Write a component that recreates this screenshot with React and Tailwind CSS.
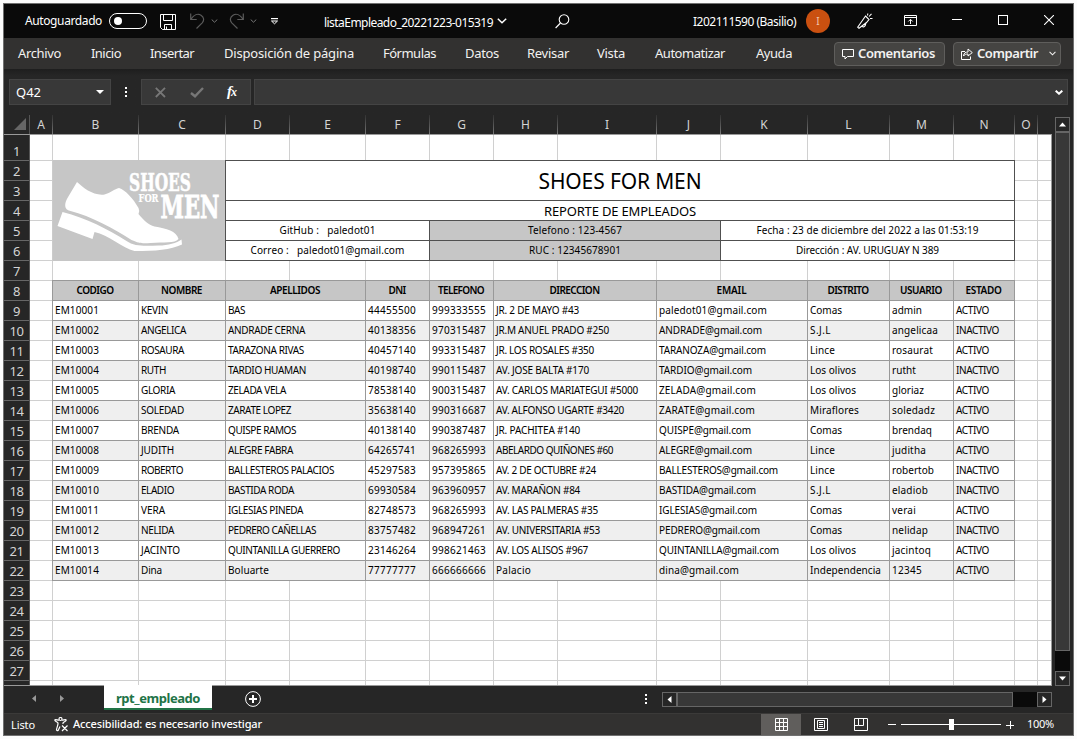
import React, { useLayoutEffect, useRef } from "react";

/* Text whose letter spacing is computed so that it takes `w` pixels. */
function Fit({ w, children, className = "" }) {
  const ref = useRef(null);
  useLayoutEffect(() => {
    const el = ref.current;
    const apply = () => {
      el.style.letterSpacing = "0px";
      const natural = el.getBoundingClientRect().width;
      const gap = (w - natural) / Math.max(1, el.textContent.length);
      el.style.letterSpacing = gap + "px";
    };
    apply();
    document.fonts.ready.then(apply);
  }, [w, children]);
  return (
    <span ref={ref} className={"inline-block whitespace-pre " + className}>
      {children}
    </span>
  );
}

const COLS = [
  ["A", 23], ["B", 86], ["C", 87], ["D", 64], ["E", 76], ["F", 64], ["G", 64], ["H", 64],
  ["I", 99], ["J", 64], ["K", 87], ["L", 82], ["M", 64], ["N", 61], ["O", 23], ["", 13],
];

/* label, first grid column, column span, label width */
const HEADS = [
  ["CODIGO", 2, 1, 37], ["NOMBRE", 3, 1, 41], ["APELLIDOS", 4, 2, 50], ["DNI", 6, 1, 17],
  ["TELEFONO", 7, 1, 46], ["DIRECCION", 8, 2, 50], ["EMAIL", 10, 2, 30], ["DISTRITO", 12, 1, 41],
  ["USUARIO", 13, 1, 42], ["ESTADO", 14, 1, 36],
];

const NAMES = [
  ["KEVIN", 27], ["ANGELICA", 45], ["ROSAURA", 43], ["RUTH", 25], ["GLORIA", 34], ["SOLEDAD", 43], ["BRENDA", 38],
  ["JUDITH", 33], ["ROBERTO", 42], ["ELADIO", 33], ["VERA", 24], ["NELIDA", 33], ["JACINTO", 39], ["Dina", 21],
];
const SURNAMES = [
  ["BAS", 17], ["ANDRADE CERNA", 77], ["TARAZONA RIVAS", 76], ["TARDIO HUAMAN", 78], ["ZELADA VELA", 58],
  ["ZARATE LOPEZ", 63], ["QUISPE RAMOS", 68], ["ALEGRE FABRA", 65], ["BALLESTEROS PALACIOS", 106],
  ["BASTIDA RODA", 66], ["IGLESIAS PINEDA", 75], ["PEDRERO CAÑELLAS", 88], ["QUINTANILLA GUERRERO", 112], ["Boluarte", 41],
];
const DNI = ["44455500", "40138356", "40457140", "40198740", "78538140", "35638140", "40138140", "64265741", "45297583", "69930584", "82748573", "83757482", "23146264", "77777777"];
const PHONES = ["999333555", "970315487", "993315487", "990115487", "900315487", "990316687", "990387487", "968265993", "957395865", "963960957", "968265993", "968947261", "998621463", "666666666"];
const STREETS = [
  ["JR. 2 DE MAYO #43", 83], ["JR.M ANUEL PRADO #250", 113], ["JR. LOS ROSALES #350", 98], ["AV. JOSE BALTA #170", 93],
  ["AV. CARLOS MARIATEGUI #5000", 142], ["AV. ALFONSO UGARTE #3420", 128], ["JR. PACHITEA #140", 84],
  ["ABELARDO QUIÑONES #60", 117], ["AV. 2 DE OCTUBRE #24", 100], ["AV. MARAÑON #84", 84], ["AV. LAS PALMERAS #35", 102],
  ["AV. UNIVERSITARIA #53", 104], ["AV. LOS ALISOS #967", 92], ["Palacio", 35],
];
const EMAILS = [
  ["paledot01", 108], ["ANDRADE", 103], ["TARANOZA", 107], ["TARDIO", 93], ["ZELADA", 97], ["ZARATE", 96], ["QUISPE", 92],
  ["ALEGRE", 93], ["BALLESTEROS", 119], ["BASTIDA", 97], ["IGLESIAS", 98], ["PEDRERO", 101], ["QUINTANILLA", 120], ["dina", 80],
];
const DISTRICTS = [
  ["Comas", 32], ["S.J.L", 21], ["Lince", 25], ["Los olivos", 46], ["Los olivos", 46], ["Miraflores", 49], ["Comas", 32],
  ["Lince", 25], ["Lince", 25], ["S.J.L", 21], ["Comas", 32], ["Comas", 32], ["Los olivos", 46], ["Independencia", 71],
];
const USERS = [
  ["admin", 30], ["angelicaa", 46], ["rosaurat", 41], ["rutht", 24], ["gloriaz", 32], ["soledadz", 43], ["brendaq", 40],
  ["juditha", 34], ["robertob", 42], ["eladiob", 36], ["verai", 24], ["nelidap", 36], ["jacintoq", 39], ["12345", 30],
];
const INACTIVE = [1, 3, 8, 9, 11];

const RECORDS = NAMES.map((n, i) => [
  ["EM100" + String(i + 1).padStart(2, "0"), 44],
  n,
  SURNAMES[i],
  [DNI[i], 48],
  [PHONES[i], 54],
  STREETS[i],
  [EMAILS[i][0] + "@gmail.com", EMAILS[i][1]],
  DISTRICTS[i],
  USERS[i],
  INACTIVE.includes(i) ? ["INACTIVO", 43] : ["ACTIVO", 33],
]);

const TRACKS = COLS.map((c) => c[1] + "px").join(" ");

function Area({ c, r, cs = 1, rs = 1, className = "", children }) {
  return (
    <div className={className} style={{ gridColumn: `${c} / span ${cs}`, gridRow: `${r} / span ${rs}` }}>
      {children}
    </div>
  );
}

function Logo() {
  return (
    <svg viewBox="0 0 173 101" className="block h-full w-full">
      <rect width="173" height="101" fill="#c6c6c6" />
      <g fill="#fff">
        <path d="M24.500 22 C31 28 41 36 52 34.500 C58 33 62 29 66.500 28 C73 30 81 39 86 48 Q87.500 51 86 54 C91 60 96 65 102 66.500 C114 68.500 124 71 126 79 C122 83.500 112 82 98 83 C90 83.500 87 83.500 79 80 C62 69 38 56 18 51 C11 50 12 43 15 38 Z" />
        <path d="M10 52 C34 58 55 69 74 81 C83 87.500 96 85.500 106 85.500 C116 85.500 124 83 129 79.500 L129.500 84.500 C118 90 103 91 82 91 C70 88 56 75 42 72 L40 79 L5 66 Z" />
        <g fontFamily='"DejaVu Serif", serif' fontWeight="700" stroke="#fff">
          <text x="76.500" y="31" fontSize="24" strokeWidth=".6" textLength="62" lengthAdjust="spacingAndGlyphs">SHOES</text>
          <text x="86" y="42" fontSize="11.500" strokeWidth=".2" textLength="20" lengthAdjust="spacingAndGlyphs">FOR</text>
          <text x="108" y="57.500" fontSize="32" strokeWidth=".9" textLength="59" lengthAdjust="spacingAndGlyphs">MEN</text>
        </g>
      </g>
    </svg>
  );
}

function Sheet() {
  const base = [];
  for (let r = 1; r <= 28; r++)
    for (let c = 1; c <= 16; c++) {
      const inReport = r >= 2 && r <= 6 && c >= 2 && c <= 14;
      const inTable = r >= 8 && r <= 22 && c >= 2 && c <= 14;
      if (inReport || inTable) continue;
      base.push(
        <Area key={r + "-" + c} c={c} r={r} className={(c < 16 ? "border-r " : "") + (r < 28 ? "border-b " : "") + "border-[#d0d0d0]"} />
      );
    }
  const box = "-ml-px -mt-px flex items-center justify-center border border-[#505050] ";
  const line = box + "pb-0.5 ";
  return (
    <div
      className="grid h-[550px] w-[1021px] shrink-0 grid-rows-[26px_repeat(26,20px)_4px] overflow-hidden bg-white font-['Noto_Sans',sans-serif] text-[10px] leading-none text-black"
      style={{ gridTemplateColumns: TRACKS }}
    >
      {base}
      <Area c={2} r={2} cs={2} rs={5} className="-ml-px -mt-px"><Logo /></Area>
      <Area c={4} r={2} cs={11} rs={2} className={box + "pt-0.5 text-[21px]"}><Fit w={163}>SHOES FOR MEN</Fit></Area>
      <Area c={4} r={4} cs={11} className={box + "pt-0.5 text-[13px]"}><Fit w={152}>REPORTE DE EMPLEADOS</Fit></Area>
      <Area c={4} r={5} cs={3} className={line}><Fit w={96}>{"GitHub :   paledot01"}</Fit></Area>
      <Area c={7} r={5} cs={4} className={line + "bg-[#c6c6c6]"}><Fit w={94}>Telefono : 123-4567</Fit></Area>
      <Area c={11} r={5} cs={4} className={line}><Fit w={222}>Fecha : 23 de diciembre del 2022 a las 01:53:19</Fit></Area>
      <Area c={4} r={6} cs={3} className={line}><Fit w={154}>{"Correo :   paledot01@gmail.com"}</Fit></Area>
      <Area c={7} r={6} cs={4} className={line + "bg-[#c6c6c6]"}><Fit w={92}>RUC : 12345678901</Fit></Area>
      <Area c={11} r={6} cs={4} className={line}><Fit w={143}>Dirección : AV. URUGUAY N 389</Fit></Area>
      {HEADS.map(([t, c, cs, w]) => (
        <Area key={t} c={c} r={8} cs={cs} className="-ml-px -mt-px flex items-center justify-center border border-[#999] bg-[#c6c6c6] pb-0.5 pr-px font-semibold">
          <Fit w={w}>{t}</Fit>
        </Area>
      ))}
      {RECORDS.map((rec, i) =>
        rec.map(([t, w], k) => (
          <Area
            key={i + "-" + k}
            c={HEADS[k][1]}
            r={9 + i}
            cs={HEADS[k][2]}
            className={"-ml-px -mt-px flex items-center border border-[#999] pb-0.5 pl-0.5 " + (i % 2 ? "bg-[#efefef]" : "bg-white")}
          >
            <Fit w={w}>{t}</Fit>
          </Area>
        ))
      )}
    </div>
  );
}

function Chevron({ className = "" }) {
  return (
    <svg viewBox="0 0 10 6" className={className} fill="none" stroke="currentColor" strokeWidth="1.500"><path d="M.8 .8 5 4.800 9.200 .8" /></svg>
  );
}

function TitleBar() {
  return (
    <div className="flex h-[34px] shrink-0 items-center bg-[#0a0a0a] text-[12px] text-white">
      <Fit w={77} className="ml-[21px] pb-px">Autoguardado</Fit>
      <div className="mb-px ml-[7px] flex h-4 w-[38px] items-center rounded-full border border-white pl-1"><div className="size-2 rounded-full bg-white" /></div>
      <svg className="ml-[13px] mt-0.5 size-4" viewBox="0 0 16 16" fill="none" stroke="#fff">
        <path d="M.5 .5h15v15H2.500L.5 13.500ZM3.500 .5v6h9v-6M4.500 15.500v-5h7v5M6.500 15.500v-3" />
      </svg>
      <svg className="ml-[14px] h-4 w-[15px]" viewBox="0 0 15 16" fill="none" stroke="#5a5a5a" strokeWidth="1.200"><path d="M.7 .5v6h6M.9 6.300C4 1.500 8 .3 11 2.200c3 2 3.400 5 1.200 7.600L6.500 15.500" /></svg>
      <Chevron className="ml-[6px] h-[4px] w-[7px] text-[#777]" />
      <svg className="ml-[11px] h-4 w-[15px]" viewBox="0 0 15 16" fill="none" stroke="#5a5a5a" strokeWidth="1.200"><path d="M14.300 .5v6h-6M14.100 6.300C11 1.500 7 .3 4 2.200c-3 2-3.400 5-1.200 7.600L8.500 15.500" /></svg>
      <Chevron className="ml-[6px] h-[4px] w-[7px] text-[#777]" />
      <svg className="ml-[14px] h-[7px] w-[7px]" viewBox="0 0 7 7"><path d="M0 0h7v1.200H0Z" fill="#fff" /><path d="M.5 3h6L3.500 5.800Z" fill="none" stroke="#fff" /></svg>
      <Fit w={169} className="ml-[46px] mt-1">listaEmpleado_20221223-015319</Fit>
      <Chevron className="ml-[4px] h-[6px] w-[10px]" />
      <svg className="ml-[48px] size-[15px]" viewBox="0 0 15 15" fill="none" stroke="#fff" strokeWidth="1.100"><circle cx="9" cy="5.500" r="4.800" /><path d="M5.500 9 .6 14" /></svg>
      <Fit w={103} className="ml-[123px] mt-0.5">I202111590 (Basilio)</Fit>
      <div className="ml-[10px] flex size-6 items-center justify-center rounded-full bg-[#ca5010] text-[10px] text-[#f3c9b0]">I</div>
      <svg className="ml-[27px] size-4" viewBox="0 0 16 16" fill="none" stroke="#fff" strokeWidth="1.100"><path d="M8.500 3 12 6.500 9.500 9.500 2 15.300.7 14.200ZM5 13c.5 1.600 3.500 1.300 4-3M10.500 2.500 10.800.5M12 3.500 14.500.8M13 5.500h2.500" /></svg>
      <svg className="-mt-0.5 ml-[31px] h-[11px] w-[13px]" viewBox="0 0 13 11" fill="none" stroke="#fff"><path d="M.5 .5h12v10H.5ZM.5 2.500h12M6.500 9V4.500M4.300 6.500l2.200-2.200 2.200 2.200" /></svg>
      <div className="-mt-[3px] ml-[35px] h-px w-[10px] bg-white" />
      <div className="-mt-0.5 ml-9 size-[10px] border border-white" />
      <svg className="-mt-0.5 ml-9 size-[10px]" viewBox="0 0 10 10" stroke="#fff" strokeWidth="1.100"><path d="M0 0 10 10M10 0 0 10" /></svg>
    </div>
  );
}

function Ribbon() {
  return (
    <div className="flex h-[31px] shrink-0 items-center bg-[#323130] text-[13px] text-[#f3f2f1]">
      <Fit w={43} className="ml-[14px]">Archivo</Fit>
      <Fit w={30} className="ml-[30px]">Inicio</Fit>
      <Fit w={44} className="ml-[29px]">Insertar</Fit>
      <Fit w={130} className="ml-[30px]">Disposición de página</Fit>
      <Fit w={53} className="ml-[29px]">Fórmulas</Fit>
      <Fit w={34} className="ml-[29px]">Datos</Fit>
      <Fit w={42} className="ml-[28px]">Revisar</Fit>
      <Fit w={28} className="ml-[28px]">Vista</Fit>
      <Fit w={70} className="ml-[30px]">Automatizar</Fit>
      <Fit w={36} className="ml-[31px]">Ayuda</Fit>
      <div className="ml-[42px] flex h-6 w-[111px] items-center rounded-sm border border-[#5f5e5c] bg-[#454442] pl-[7px] font-semibold">
        <svg className="size-3" viewBox="0 0 12 12" fill="none" stroke="#fff"><path d="M.5 1.500h11v7H5.500L3 11V8.500H.5Z" /></svg>
        <Fit w={77} className="ml-1">Comentarios</Fit>
      </div>
      <div className="ml-2 flex h-6 w-[108px] items-center rounded-sm border border-[#5f5e5c] bg-[#454442] pl-[7px] font-semibold">
        <svg className="size-3" viewBox="0 0 12 12" fill="none" stroke="#fff"><path d="M4 3.500H.5v8h9V8.500M2.500 8c.3-3 2-4 4.500-4V1l4.300 3.600L7 8V6C5 6 3.500 6.500 2.500 8Z" /></svg>
        <Fit w={61} className="ml-1">Compartir</Fit>
        <Chevron className="ml-[11px] h-[5px] w-[7px]" />
      </div>
    </div>
  );
}

function FormulaBar() {
  const field = "flex h-[26px] items-center border border-[#444] bg-[#383838] ";
  return (
    <div className="flex h-[46px] shrink-0 items-start bg-gradient-to-b from-[#1e1e1e] to-[#262626] to-15% pl-[5px] pt-[10px] text-white">
      <div className={field + "w-[102px] pl-[6px] text-[13px]"}>
        <Fit w={25} className="mt-0.5">Q42</Fit>
        <svg className="ml-[55px] h-1 w-2" viewBox="0 0 8 4" fill="#fff"><path d="M0 0h8L4 4Z" /></svg>
      </div>
      <div className="ml-[14px] mt-2 flex flex-col gap-0.5"><i className="size-0.5 bg-white" /><i className="size-0.5 bg-white" /><i className="size-0.5 bg-white" /></div>
      <div className={field + "ml-[14px] w-[110px] pl-[13px]"}>
        <svg className="size-[11px]" viewBox="0 0 11 11" stroke="#777" strokeWidth="1.800"><path d="M.8 .8 10 10M10 .8 .8 10" /></svg>
        <svg className="ml-6 h-[11px] w-[14px]" viewBox="0 0 14 11" fill="none" stroke="#777" strokeWidth="2.400"><path d="M1 6l4 3.300L13 1" /></svg>
        <span className="-mt-0.5 ml-[23px] font-['Liberation_Serif',serif] text-[15px] font-bold italic leading-none">f<span className="-ml-px text-[12px]">x</span></span>
      </div>
      <div className={field + "ml-[3px] w-[814px] justify-end pr-1"}>
        <svg className="h-[5px] w-2" viewBox="0 0 8 5" fill="none" stroke="#fff" strokeWidth="2"><path d="M.7 .7 4 3.700 7.300 .7" /></svg>
      </div>
    </div>
  );
}

function Arrow({ d }) {
  return (
    <div className="flex size-[15px] shrink-0 items-center justify-center border border-[#666] bg-[#262626]">
      <svg className="size-[7px]" viewBox="0 0 7 7" fill="#fff"><path d={d} /></svg>
    </div>
  );
}

function Grid() {
  return (
    <div className="flex h-[571px] shrink-0 bg-[#262626] text-[#d4d4d4]">
      <div className="flex w-[1048px] shrink-0 flex-col">
        <div className="flex h-5 shrink-0 border-b border-[#999] text-[12px]">
          <div className="relative w-[26px] shrink-0 border-r border-[#555]">
            <svg className="absolute bottom-1 right-[3px] size-3" viewBox="0 0 12 12" fill="#666"><path d="M12 0v12H0Z" /></svg>
          </div>
          {COLS.map(([n, w], i) => (
            <div key={i} className="flex shrink-0" style={{ width: w }}>
              <span className="flex-1 text-center leading-[19px]">{n}</span>
              {i < 15 && <i className="w-px bg-gradient-to-b from-[#333] to-[#777]" />}
            </div>
          ))}
        </div>
        <div className="flex">
          <div className="grid h-[550px] w-[26px] shrink-0 grid-rows-[26px_repeat(26,20px)_4px] overflow-hidden border-r border-[#555] text-[13px]">
            {Array.from({ length: 27 }, (_, i) => (
              <div key={i} className="flex items-end justify-center border-b border-[#666] leading-[18px]"><Fit w={i < 9 ? 7 : 14}>{String(i + 1)}</Fit></div>
            ))}
          </div>
          <Sheet />
          <div className="w-px shrink-0 bg-[#999]" />
        </div>
        <div className="h-px w-full bg-[#999]" />
      </div>
      <div className="ml-[3px] mt-[2px] flex h-[569px] w-[15px] flex-col">
        <Arrow d="M0 5.500h7L3.500 1.500Z" />
        <div className="h-[519px] border border-[#666] bg-[#383838]" />
        <div className="flex-1 bg-[#0a0a0a]" />
        <Arrow d="M0 1.500h7L3.500 5.500Z" />
      </div>
    </div>
  );
}

function TabBar() {
  return (
    <div className="flex h-[27px] shrink-0 items-start bg-[#262626]">
      <svg className="ml-[28px] mt-[9px] h-[7px] w-1" viewBox="0 0 4 7" fill="#999"><path d="M4 0v7L0 3.500Z" /></svg>
      <svg className="ml-6 mt-[9px] h-[7px] w-1" viewBox="0 0 4 7" fill="#999"><path d="M0 0v7L4 3.500Z" /></svg>
      <div className="-mt-px ml-[40px] flex h-[25px] w-[108px] items-center justify-center border-b-2 border-[#217346] bg-white pt-1 text-[13px] font-bold text-[#217346]">
        <Fit w={84}>rpt_empleado</Fit>
      </div>
      <svg className="ml-[33px] mt-[5px] size-4" viewBox="0 0 16 16" fill="none" stroke="#fff"><circle cx="8" cy="8" r="7.400" /><path d="M8 4v8M4 8h8" strokeWidth="2" /></svg>
      <div className="ml-[384px] mt-2 flex flex-col gap-0.5"><i className="size-0.5 bg-white" /><i className="size-0.5 bg-white" /><i className="size-0.5 bg-white" /></div>
      <div className="ml-[15px] mt-[6px] flex w-[390px]">
        <Arrow d="M5.500 0v7L1.500 3.500Z" />
        <div className="w-[336px] border border-[#666] bg-[#383838]" />
        <div className="flex-1 bg-[#0a0a0a]" />
        <Arrow d="M1.500 0v7L5.500 3.500Z" />
      </div>
    </div>
  );
}

function StatusBar() {
  return (
    <div className="flex h-[22px] shrink-0 items-center border-t border-[#3b3a39] bg-[#323130] text-[11px] text-white">
      <Fit w={24} className="ml-[7px] mt-0.5">Listo</Fit>
      <svg className="ml-[19px] size-[15px]" viewBox="0 0 15 15" fill="none" stroke="#fff" strokeWidth="1.200"><circle cx="6.500" cy="2" r="1.500" /><path d="M5 3.200C3 3 1 1.800.8 3.200 1 4.500 3.500 4.800 4 6c.3 2-1.500 5-1.500 7 .6 1 1.600.8 2-.3L6 9.500M8 3.200c2-.2 4-1.400 4.200 0C12 4.500 9.500 4.800 9 6v1M8 8.500l5.500 5.500M13.500 8.500 8 14" /></svg>
      <Fit w={189} className="ml-1 font-medium">Accesibilidad: es necesario investigar</Fit>
      <div className="ml-[499px] flex h-[21px] w-10 items-center justify-center bg-[#605e5c]">
        <svg className="size-[13px]" viewBox="0 0 13 13" fill="none" stroke="#fff"><path d="M.5 .5h12v12H.5ZM4.500 .5v12M8.500 .5v12M.5 4.500h12M.5 8.500h12" /></svg>
      </div>
      <svg className="ml-[13px] h-[13px] w-[14px]" viewBox="0 0 14 13" fill="none" stroke="#fff"><path d="M.5 .5h13v12H.5ZM3.500 2.500h7v8h-7ZM5 4.500h4M5 6.500h4M5 8.500h4" /></svg>
      <svg className="ml-[26px] h-[13px] w-[14px]" viewBox="0 0 14 13" fill="none" stroke="#fff"><path d="M.5 .5h13v12H.5ZM4.500 .5v7h5v-7M.5 7.500h4" /></svg>
      <div className="ml-[20px] h-px w-2 bg-white" />
      <div className="ml-[5px] flex h-[11px] items-center">
        <div className="h-px w-12 bg-white" /><div className="h-[11px] w-[5px] bg-white" /><div className="h-px w-[47px] bg-white" />
      </div>
      <svg className="ml-[5px] size-2" viewBox="0 0 8 8" stroke="#fff"><path d="M0 4.500h8M4.500 0v8" /></svg>
      <Fit w={27} className="ml-[13px]">100%</Fit>
    </div>
  );
}

export default function App() {
  return (
    <div className="h-[739px] w-[1077px] overflow-hidden bg-[#fcfcfc] pl-[3px] pt-[3px] font-['Noto_Sans',sans-serif]">
      <div className="flex h-[733px] w-[1071px] flex-col overflow-hidden border border-[#707070] bg-[#262626]">
        <TitleBar />
        <Ribbon />
        <FormulaBar />
        <Grid />
        <TabBar />
        <StatusBar />
      </div>
    </div>
  );
}
